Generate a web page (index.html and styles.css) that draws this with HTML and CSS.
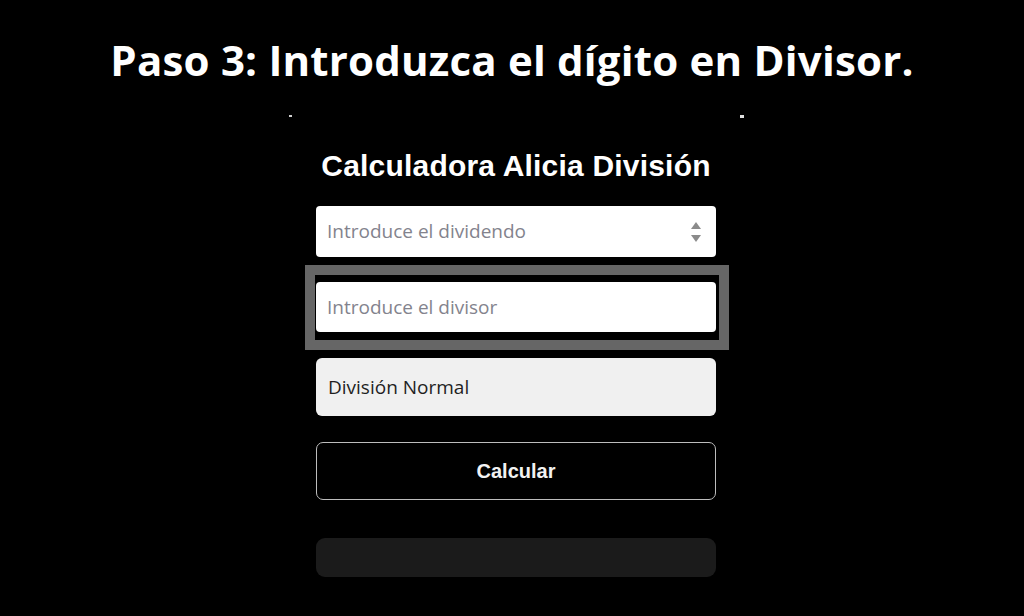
FILE: index.html
```html
<!DOCTYPE html>
<html lang="es">
<head>
<meta charset="utf-8">
<title>Paso 3</title>
<link rel="stylesheet" href="styles.css">
</head>
<body>
<h1 class="step">Paso 3: Introduzca el dígito en Divisor.</h1>
<div class="shot">
  <span class="mark mark-l"></span>
  <span class="mark mark-r"></span>
  <div class="form">
    <h2 class="title">Calculadora Alicia División</h2>
    <div class="field">
      <span class="placeholder">Introduce el dividendo</span>
      <svg class="spin" width="12" height="24" viewBox="0 0 12 24"><path d="M6 2 L11 9 H1 Z" fill="#8b8b8b"/><path d="M1 15 H11 L6 22 Z" fill="#8b8b8b"/></svg>
    </div>
    <div class="field-wrap">
      <div class="field"><span class="placeholder">Introduce el divisor</span></div>
      <div class="highlight"></div>
    </div>
    <div class="select">División Normal</div>
    <div class="button">Calcular</div>
    <div class="result"></div>
  </div>
</div>
</body>
</html>
```
FILE: styles.css
```css
html, body {
  margin: 0;
  padding: 0;
  background: #000;
  width: 1024px;
  height: 616px;
  overflow: hidden;
}
.step {
  margin: 0;
  height: 114px;
  padding-top: 32px;
  box-sizing: border-box;
  text-align: center;
  font-family: "Open Sans", "Noto Sans", sans-serif;
  font-weight: 700;
  font-size: 42px;
  letter-spacing: 0.2px;
  line-height: 56px;
  color: #fff;
}
.shot {
  position: relative;
  height: 502px;
}
.mark {
  position: absolute;
  top: 1px;
  width: 3px;
  height: 2px;
  background: #cfcfcf;
}
.mark-l { left: 289px; }
.mark-r { left: 740px; width: 4px; height: 3px; background: #e0e0e0; }
.form {
  margin-left: 316px;
  width: 400px;
  display: flex;
  flex-direction: column;
  padding-top: 32px;
}
.title {
  margin: 0 0 20px 0;
  text-align: center;
  font-family: "Liberation Sans", Arial, sans-serif;
  font-weight: 700;
  font-size: 30px;
  letter-spacing: 0.2px;
  line-height: 40px;
  color: #fff;
}
.field {
  height: 51px;
  background: #fff;
  border-radius: 4px;
  display: flex;
  align-items: center;
  justify-content: space-between;
  padding: 0 12px 0 11px;
  box-sizing: border-box;
}
.placeholder {
  font-family: "Open Sans", "Noto Sans", sans-serif;
  font-size: 19px;
  color: #83838d;
  padding-bottom: 1px;
}
.spin { margin-right: 2px; }
.field-wrap {
  position: relative;
  margin-top: 25px;
}
.field-wrap .field { height: 50px; }
.highlight {
  position: absolute;
  left: -11px;
  right: -13px;
  top: -17px;
  bottom: -18px;
  border: 10px solid #666;
}
.select {
  margin-top: 26px;
  height: 58px;
  background: #f0f0f0;
  border-radius: 6px;
  display: flex;
  align-items: center;
  padding-left: 12px;
  box-sizing: border-box;
  font-family: "Open Sans", "Noto Sans", sans-serif;
  font-size: 19px;
  color: #1f1f1f;
}
.button {
  margin-top: 26px;
  height: 58px;
  border: 1px solid #bdbdbd;
  border-radius: 7px;
  box-sizing: border-box;
  display: flex;
  align-items: center;
  justify-content: center;
  font-family: "Liberation Sans", Arial, sans-serif;
  font-weight: 700;
  font-size: 20px;
  color: #f2f2f2;
}
.result {
  margin-top: 38px;
  height: 39px;
  background: #1b1b1b;
  border-radius: 9px;
}
```
